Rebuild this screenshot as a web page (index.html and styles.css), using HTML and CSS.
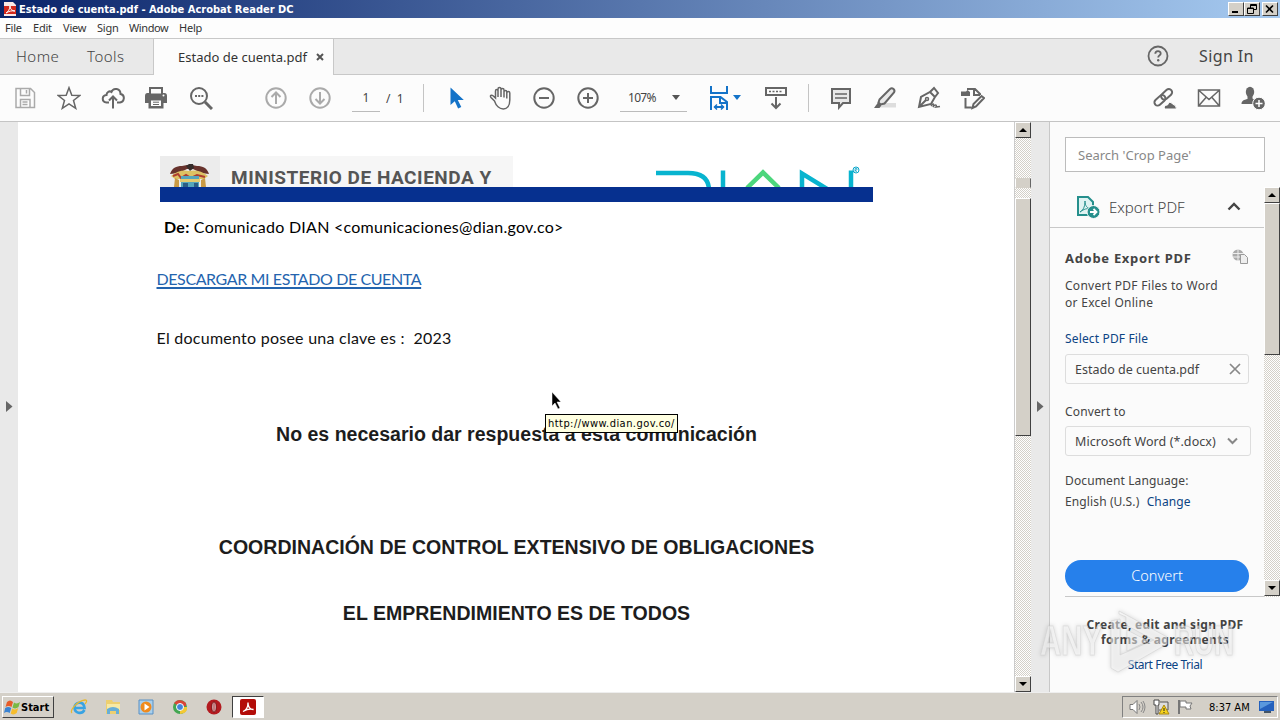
FILE: index.html
```
<!DOCTYPE html>
<html lang="en"><head>
<meta charset="utf-8">
<title>Estado de cuenta.pdf - Adobe Acrobat Reader DC</title>
<link rel="stylesheet" href="styles.css">
</head><body>

<div class="titlebar">
  <svg class="appicon" width="14" height="16" viewBox="0 0 14 16"><path d="M1 1h9l3 3v11H1z" fill="#fbe9e6"/><path d="M1 5h12v8H1z" fill="#d3291c"/><path d="M3 12c2-1 4-4 4-7 0 3 2 5 5 5-3-.5-6 0-9 2z" fill="none" stroke="#fff"/></svg>
  <span class="title">Estado de cuenta.pdf - Adobe Acrobat Reader DC</span>
  <span class="winbtn"><svg width="12" height="10"><path d="M2 8h6" stroke="#000" stroke-width="2"/></svg></span>
  <span class="winbtn"><svg width="12" height="10"><path d="M4.500 4V.5h6v5H8M4 1.500h7M1.500 4v5.500h6V4zM1 4.500h7" fill="none" stroke="#000"/></svg></span>
  <span class="winbtn close"><svg width="12" height="10"><path d="M2 1.500l7 7M9 1.500l-7 7" stroke="#000" stroke-width="1.600"/></svg></span>
</div>

<div class="menubar">
  <span class="m1">File</span><span class="m2">Edit</span><span class="m3">View</span><span class="m4">Sign</span><span class="m5">Window</span><span>Help</span>
</div>

<div class="tabs">
  <div class="tab-left"><span class="home">Home</span><span class="tools">Tools</span></div>
  <div class="tab-active"><span>Estado de cuenta.pdf</span><svg width="8" height="8"><path d="M1 1l6 6M7 1L1 7" stroke="#555" stroke-width="2"/></svg></div>
  <div class="tab-right">
    <svg width="22" height="22" viewBox="0 0 22 22"><circle cx="11" cy="11" r="9.500" fill="none" stroke="#666" stroke-width="1.800"/><path d="M8.300 8.800c0-3.600 5.400-3.400 5.400-.4 0 2-2.500 2-2.500 4.100" fill="none" stroke="#666" stroke-width="1.800"/><circle cx="11.200" cy="15.300" r="1.200" fill="#666"/></svg>
    <span class="signin">Sign In</span>
  </div>
</div>

<div class="toolbar">
  <span class="ic dim"><svg viewBox="0 0 24 24"><path d="M3 2.500h14.500l4 4v15H3zM7.500 3v6.500h9V3M7.500 21v-7.500h9.500V21M13.500 4v3.500M9.500 16h5M9.500 18.500h5"/></svg></span>
  <span class="ic"><svg viewBox="0 0 24 24"><path d="M12 1.700l2.800 7.500 8 .3-6.300 5 2.200 7.800-6.700-4.500-6.700 4.500 2.200-7.800-6.300-5 8-.3z"/></svg></span>
  <span class="ic"><svg viewBox="0 0 24 24"><path class="w2" d="M8 16.500H5.500c-5-.5-5-7 0-7.500 0-3 3-4.500 5-3 2-5 9-3.500 9 2 5 1 4 8-.5 8.500H16M12 22.500V11M8 14.500l4-4 4 4"/></svg></span>
  <span class="ic"><svg viewBox="0 0 24 24"><path class="fill" d="M4 1h14v6h1.500Q22 7 22 10v7h-3.500v5.500h-15V17H0v-7q0-3 2.500-3H4z"/><path d="M6 3h10v4.500H6zM6 14.500h10V20H6z" fill="#fcfcfc" stroke="none"/><path d="M8 16.200h6M8 18.500h6" stroke-width="1"/><circle cx="18.500" cy="9.500" r="1" fill="#fff" stroke="none"/></svg></span>
  <span class="ic"><svg viewBox="0 0 24 24"><circle class="w2" cx="10" cy="10" r="8"/><path d="M16 16l7 7" stroke-width="3"/><path d="M6 10h2M9.200 10h2M12.400 10h2" stroke-width="2"/></svg></span>
  <span class="ic dim up"><svg viewBox="0 0 24 24"><circle class="w2" cx="12" cy="12" r="9.700"/><path class="w2" d="M12 18V7M7.500 11L12 6.500l4.500 4.500"/></svg></span>
  <span class="ic dim"><svg viewBox="0 0 24 24"><circle class="w2" cx="12" cy="12" r="9.700"/><path class="w2" d="M12 6v11M7.500 13l4.500 4.500 4.500-4.500"/></svg></span>
  <span class="pageno">1</span><span class="pages">/&nbsp; 1</span>
  <span class="sep"></span>
  <span class="ic blue"><svg viewBox="0 0 24 24"><path d="M6.500 1.500v17.500l4.300-3.800 3.300 7.300 3.200-1.500-3.500-7h6z" fill="#1473c8" stroke="none"/></svg></span>
  <span class="ic"><svg viewBox="0 0 24 24"><path d="M6.500 15L3 11.500c-1.500-2 .5-3 2-1.700L7.500 12V5c0-2 2.500-2 2.500 0V3c0-2 3-2 3 0v1c0-2 3-2 3 0v2c0-2 2.800-2 2.800 0v1c0-2 3-2 3 0V14c0 12-12 11.500-15.300 1zM10 5v6M13 4v7M16 6v5.500M18.800 7v5.500"/></svg></span>
  <span class="ic"><svg viewBox="0 0 24 24"><circle class="w2" cx="12" cy="12" r="9.700"/><path class="w2" d="M7 12h10"/></svg></span>
  <span class="ic"><svg viewBox="0 0 24 24"><circle class="w2" cx="12" cy="12" r="9.700"/><path class="w2" d="M7 12h10M12 7v10"/></svg></span>
  <span class="zoom">107%<svg width="8" height="5"><path d="M0 0h8L4 5z" fill="#555"/></svg></span>
  <span class="ic blue fit"><svg viewBox="0 0 24 24"><path class="w2" d="M3 0v7h16V0M3 24V11h9.500l6.500 5v8M12 11v6h7M6.500 21h9"/><path d="M9 18.500L6.500 21l2.500 2.500M13 18.500l2.500 2.500-2.500 2.500"/></svg><svg class="drop" width="8" height="5" viewBox="0 0 8 5"><path d="M0 0h8L4 5z" fill="#1473c8" stroke="none"/></svg></span>
  <span class="ic scr"><svg viewBox="0 0 24 24"><path class="w2" d="M2 2h20v7H2zM12 11v11M7.500 17.500L12 22l4.500-4.500"/><path d="M5 5.500h14" stroke-dasharray="2 1.500"/></svg></span>
  <span class="sep sep2"></span>
  <span class="ic"><svg viewBox="0 0 24 24"><path d="M3 3h18v14h-7l-4 4.500V17H3z" fill="#eee" class="w2 tint"/><path d="M6 8h12M6 12h12"/></svg></span>
  <span class="ic"><svg viewBox="0 0 24 24"><path d="M11 17h12v4.500H7z" fill="#ddd" stroke="none"/><path class="w2 tint" d="M6.500 13.500L17 3c2.500-2 5.500 1 4 3.500L11.500 17.500l-4 1-2-2z"/><path class="fill" d="M5 16.500l3.500 3-2 2.500H1z"/></svg></span>
  <span class="ic"><svg viewBox="0 0 24 24"><path class="w2" d="M2 21L4 11l9-5 5 5-4 7zM2 21l7-7M13 6l4-4 4 5-3 4"/><path d="M14 20c3-4 3-1 2 1 3-4 4-1 3 0l4-.5"/><circle cx="10" cy="13" r="1.500"/></svg></span>
  <span class="ic"><svg viewBox="0 0 24 24"><path class="w2" d="M6 3h8l5 5v1M13 3v6h6M4.500 12v9.500h6M11.500 22l1-4 8-8 2.500 2-8 8.500z"/><path class="fill" d="M0 5.500h5L6.500 4 9 6v4H0z"/></svg></span>
  <span class="ic share"><svg viewBox="0 0 24 24"><g transform="rotate(-42 11 11)"><rect class="w2" x="-.5" y="7.500" width="12.500" height="6.500" rx="3.200"/><rect class="w2" x="8.500" y="7.500" width="12.500" height="6.500" rx="3.200"/></g><path d="M11.500 23q-1-4 3-4 2-5 5-1 4 1 4 5z" fill="#666" stroke="#fcfcfc" stroke-width="1"/></svg></span>
  <span class="ic"><svg viewBox="0 0 24 24"><path d="M1.500 4h21v16h-21zM2 4.500l10 9 10-9M2 19.500l7-8M22 19.500l-7-8"/></svg></span>
  <span class="ic"><svg viewBox="0 0 24 24"><ellipse class="fill" cx="9" cy="6" rx="4.200" ry="5.200"/><path class="fill" d="M6.500 9h5v3.500l3 2V18H.5c0-3.500 2.500-4 6-5z"/><circle cx="18" cy="17.500" r="6.300" fill="#666" stroke="#fcfcfc" stroke-width="1"/><path d="M18 14v7M14.500 17.500h7" stroke="#fff"/></svg></span>
</div>

<div class="main">
  <div class="strip left"><svg width="7" height="11"><path d="M0 0l6.500 5.500L0 11z" fill="#666"/></svg></div>

  <div class="document">
    <div class="letterhead">
      <div class="escudo"><svg width="60" height="31" viewBox="0 0 60 31"><path d="M10 18c2-6 6-8 12-8l5-1h5l5 1c6 0 10 2 12 8l-8-1-8-4h-6l-8 4z" fill="#67322c"/><path d="M26 10l3-2h4l1 4-4 3z" fill="#352c2a"/><path d="M11 20q9-7 18-5 10-2 19 5l-4 3H15z" fill="#ddc264"/><path d="M13 20l5-2 3 4 5-3 5 3 6-3 8 2" fill="none" stroke="#af3d30" stroke-width="2"/><path d="M21 20h18v11H21z" fill="#57a6bc"/><path d="M15 22l4 2v7h-5zM45 22l-4 2v7h5z" fill="#c99a45"/><path d="M20 23h20v3H20z" fill="#e4ca70"/><path d="M23 27h5v4h-5zM34 27h4v4h-4z" fill="#2c5d85"/></svg></div>
      <div class="ministry">MINISTERIO DE HACIENDA Y</div>
      <svg class="dian" width="210" height="31" viewBox="0 0 210 31"><path d="M0 17h32q20 0 21 16M67 14.500V31M146 31V17.500l26 16M195 14.500V31" fill="none" stroke="#08b4cf" stroke-width="4.500"/><path d="M91 32l16-15.500L123 32" fill="none" stroke="#4cd67c" stroke-width="4.500"/><circle cx="200" cy="14" r="3" fill="none" stroke="#08a5c9"/><path d="M199 16v-3.500h2v1.500h-2l2 2" fill="none" stroke="#08a5c9" stroke-width=".7"/></svg>
    </div>
    <div class="bluebar"></div>
    <p class="de"><b>De:</b> Comunicado DIAN &lt;comunicaciones@dian.gov.co&gt;</p>
    <p class="link"><a>DESCARGAR MI ESTADO DE CUENTA</a></p>
    <p class="clave">El documento posee una clave es :&nbsp; 2023</p>
    <p class="big b1">No es necesario dar respuesta a esta comunicación</p>
    <p class="big b2">COORDINACIÓN DE CONTROL EXTENSIVO DE OBLIGACIONES</p>
    <p class="big b3">EL EMPRENDIMIENTO ES DE TODOS</p>
  </div>

  <div class="scroll docscroll">
    <span class="sbtn"><svg width="8" height="4"><path d="M0 4h8L4 0z"/></svg></span>
    <span class="mark"></span>
    <span class="thumb"></span>
    <span class="sbtn end"><svg width="8" height="4"><path d="M0 0h8L4 4z"/></svg></span>
  </div>
  <div class="strip right"><svg width="7" height="11"><path d="M0 0l6.500 5.500L0 11z" fill="#666"/></svg></div>

  <div class="panel">
    <div class="search">Search 'Crop Page'</div>
    <div class="scroller">
      <div class="export">
        <div class="exporthead">
          <svg width="24" height="24" viewBox="0 0 24 24"><path d="M2 2h10l5 5v13H2z" fill="#dff3f2" stroke="#258f8c" stroke-width="2"/><path d="M4 17c4-2 5-7 5-11 0 5 2 7 6 8-4-1-7 0-11 3z" fill="none" stroke="#258f8c"/><circle cx="17.500" cy="17" r="6.500" fill="#258f8c" stroke="#fbfbfb"/><path d="M14 17h6M17.500 14l3 3-3 3" fill="none" stroke="#fff" stroke-width="1.800"/></svg>
          <span>Export PDF</span>
          <svg class="chev" width="14" height="9"><path d="M1.500 7.500L7 2l5.500 5.500" fill="none" stroke="#444" stroke-width="2.400"/></svg>
        </div>
        <div class="exportbody">
          <div class="h"><b>Adobe Export PDF</b><svg width="17" height="17" viewBox="0 0 17 17"><circle cx="6" cy="6" r="5.500" fill="#aaa"/><path d="M1 4.500h10M1 8h8M6 0v12" stroke="#eee" fill="none"/><path d="M8.500 5.500h4l3 3v6h-7z" fill="#eee" stroke="#999"/></svg></div>
          <p class="desc">Convert PDF Files to Word<br/>or Excel Online</p>
          <p class="select">Select PDF File</p>
          <div class="field">Estado de cuenta.pdf<svg width="12" height="12"><path d="M1 1l10 10M11 1L1 11" stroke="#888" stroke-width="1.700"/></svg></div>
          <p class="to">Convert to</p>
          <div class="field f2">Microsoft Word (*.docx)<svg width="11" height="8"><path d="M1 1.500l4.500 4.500L10 1.500" fill="none" stroke="#888" stroke-width="2"/></svg></div>
          <p class="lang">Document Language:<br/><span class="english">English (U.S.)</span> <span class="change">Change</span></p>
          <div class="convert">Convert</div>
        </div>
      </div>
      <div class="scroll panelscroll">
        <span class="sbtn"><svg width="8" height="4"><path d="M0 4h8L4 0z"/></svg></span>
        <span class="thumb"></span>
        <span class="sbtn end"><svg width="8" height="4"><path d="M0 0h8L4 4z"/></svg></span>
      </div>
    </div>
    <div class="promo"><b class="p1">Create, edit and sign PDF</b><b class="p2">forms &amp; agreements</b><span>Start Free Trial</span></div>
  </div>
</div>

<div class="taskbar">
  <div class="start"><svg width="17" height="17" viewBox="0 0 17 17"><path d="M3 3q3-3 6 0L7.500 8q-3-2-6 0z" fill="#e75c29"/><path d="M10 3.500q3 2 6-.5l-1.500 5q-3 2.500-6 .5z" fill="#79b943"/><path d="M1.200 9q3-2 6 0l-1.500 5q-3-2-5.700 0z" fill="#3a83d2"/><path d="M8.200 9.500q3 2 6-.5l-1.500 5q-3 2.500-6 .5z" fill="#f6bd2c"/></svg>Start</div>
  <svg class="t ie" viewBox="0 0 18 18"><path d="M14.500 12c-3 5-10 3-10-2.500s9-7.500 10 .5H5" fill="none" stroke="#38a3e3" stroke-width="2.600"/><path d="M2 15C-1 13 7 3 15 2c3 0 1 3 0 4" fill="none" stroke="#e8b82f" stroke-width="1.300"/></svg>
  <svg class="t" viewBox="0 0 18 18"><path d="M2 2h6l1 2h7v12H2z" fill="#edcf70"/><path d="M3 6h13v6H3z" fill="#f7e9a5"/><path d="M3 16v-5q6-4 12 0v5h-3v-3H6v3z" fill="#67aed7"/></svg>
  <svg class="t" viewBox="0 0 18 18"><path d="M2 2h14v14H2z" fill="#a8cfec" stroke="#5990c5"/><circle cx="9" cy="9" r="5.500" fill="#ef8a1d"/><path d="M7.500 5.500l5 3.500-5 3.500z" fill="#fff"/></svg>
  <svg class="t" viewBox="0 0 18 18"><circle cx="9" cy="9" r="7" fill="#43a651"/><path d="M9 9L3 5q5-6 12 0v3z" fill="#da4437"/><path d="M9 9h7q1 6-7 7z" fill="#f5c933"/><circle cx="9" cy="9" r="3.500" fill="#4285db" stroke="#fff"/></svg>
  <svg class="t" viewBox="0 0 18 18"><circle cx="9" cy="9" r="7.500" fill="#b31b20"/><ellipse cx="9" cy="9" rx="2.200" ry="5" fill="#efdddd" stroke="#741013"/><path d="M9 5v8" stroke="#a11b20"/></svg>
  <div class="task"><svg width="16" height="16" viewBox="0 0 16 16"><rect width="16" height="16" rx="2" fill="#b30c08"/><path d="M3 12.500c4-1.500 5-6 5-9 0 4 2 7 5.500 7-4-1-7 0-10.500 2z" fill="none" stroke="#fff" stroke-width="1.300"/></svg></div>
  <div class="tray">
    <svg width="17" height="16" viewBox="0 0 17 16"><path d="M1 5.500h3l4-4v13l-4-4H1z" fill="#fff" stroke="#777"/><path d="M10 5q2 3 0 6M12 3q4 5 0 10M14 2q4 6 0 12" fill="none" stroke="#888"/></svg>
    <svg width="17" height="16" viewBox="0 0 17 16"><path d="M1 1h5v5H5v9H3V6H1z" fill="#fff" stroke="#444"/><path d="M7 3h8v8H6" fill="#ddd" stroke="#555"/><path d="M11 6l5 9H6z" fill="#f6d31b" stroke="#ac8911"/><path d="M11 9v3M11 13v1" stroke="#222"/></svg>
    <svg width="17" height="16" viewBox="0 0 17 16"><path d="M2 1v14" stroke="#777" stroke-width="2"/><path d="M3 2h6v2h6l-2 3 1 3H9V8H3z" fill="#fff" stroke="#777"/></svg>
    <span class="clock">8:37 AM</span>
    <svg width="16" height="14" viewBox="0 0 16 14"><path d="M0 1h15v10H0z" fill="#2461bd"/><path d="M1 2h13L1 9z" fill="#5998dd"/><path d="M5 12h7" stroke="#456" stroke-width="2"/></svg>
  </div>
</div>

<div class="tooltip">http://www.dian.gov.co/</div>
<svg class="cursor" width="13" height="20" viewBox="0 0 13 20"><path d="M1 1v14l3-3 3 6 2-1-3-6h4z" fill="#000" stroke="#fff" stroke-width=".5"/></svg>
<svg class="watermark" width="204" height="70" viewBox="0 0 204 70"><g fill="#fff" fill-opacity=".5" stroke="#ccc" stroke-opacity=".5"><text x="4" y="48" textLength="62" lengthAdjust="spacingAndGlyphs">ANY</text><text x="138" y="48" textLength="60" lengthAdjust="spacingAndGlyphs">RUN</text><path d="M75 14l9-2v36l34-15-28-15v-8l-7-3v-3l48 26v7L82 65l-7-4z"/><path d="M91 23l21 11-21 10z"/></g></svg>
</body></html>
```
FILE: styles.css
```
* { box-sizing: border-box; }
body { margin: 0; width: 1280px; height: 720px; overflow: hidden; background: #fff;
       font-family: "Noto Sans", sans-serif; font-size: 12px; color: #444; white-space: nowrap;
       display: flex; flex-direction: column; }
p { margin: 0; }
svg { display: block; flex: none; }

.titlebar { height: 18px; flex: none; display: flex; align-items: center; padding: 0 2px 0 3px;
            background: linear-gradient(90deg, #0a246a, #a6caf0); }
.title { flex: 1; margin-left: 2px; color: #fff; font: bold 11px "DejaVu Sans Condensed", "DejaVu Sans", sans-serif; font-stretch: condensed; }
.winbtn { width: 16px; height: 14px; background: #d4d0c8; border: 1px solid; border-color: #fff #404040 #404040 #fff;
          display: flex; align-items: center; justify-content: center; }
.close { margin-left: 2px; }

.menubar { height: 20px; flex: none; padding-left: 5px; display: flex; line-height: 20px; font-size: 11px; letter-spacing: -.2px; color: #333; background: #fdfdfd; }
.m1 { width: 28px; }
.m2 { width: 30px; }
.m3 { width: 34px; }
.m4 { width: 32px; }
.m5 { width: 50px; letter-spacing: -.4px; }

.tabs { height: 37px; flex: none; display: flex; background: #e9e9e9; border-top: 1px solid #c8c8c8; }
.tab-left { width: 154px; padding-left: 16px; display: flex; line-height: 35px; font-size: 15px; font-weight: 300;
            letter-spacing: .5px; border-right: 1px solid #c8c8c8; border-bottom: 1px solid #c8c8c8; }
.home { width: 71px; }
.tab-active { width: 179px; padding: 0 0 1px 24px; display: flex; align-items: center; background: #fcfcfc; font-size: 13px; color: #333; }
.tab-active span { width: 138px; }
.tab-right { flex: 1; display: flex; align-items: center; justify-content: flex-end; padding-bottom: 1px; border-left: 1px solid #c8c8c8; border-bottom: 1px solid #c8c8c8; }
.signin { width: 81px; margin-left: 30px; font-size: 16px; letter-spacing: .4px; }

.toolbar { height: 47px; flex: none; display: flex; align-items: center; padding-left: 3px; background: #fcfcfc; border-bottom: 1px solid #c4c4c4; }
.ic { width: 44px; display: flex; justify-content: center; position: relative; }
.ic svg { width: 24px; height: 24px; fill: none; stroke: #666; stroke-width: 1.5; }
.ic.dim svg { stroke: #aaa; }
.ic.blue svg { stroke: #1473c8; }
.ic .w2 { stroke-width: 2; }
.ic .fill { fill: #666; stroke: none; }
.ic .tint { fill: #e8e8e8; }
.ic .drop { position: absolute; left: 35px; top: 9px; width: 8px; height: 5px; }
.up { margin-left: 31px; }
.pageno { width: 28px; height: 28px; margin-left: 10px; border-bottom: 1px solid #bbb; line-height: 28px; text-align: center; }
.pages { margin-left: 6px; width: 37px; }
.sep { width: 1px; height: 28px; background: #c4c4c4; margin-right: 10px; }
.zoom { width: 67px; height: 28px; margin-left: 10px; padding-left: 8px; border-bottom: 1px solid #bbb; line-height: 28px;
        display: flex; align-items: center; justify-content: space-between; padding-right: 7px; letter-spacing: -.7px; }
.fit { margin-left: 11px; }
.scr { margin-left: 12px; }
.sep2 { margin-left: 10px; }
.share { margin-left: 148px; }

.main { flex: 1; display: flex; min-height: 0; }
.strip { width: 18px; background: #e9e9e9; display: flex; align-items: center; padding: 0 0 1px 6px; }
.document { width: 996px; padding-top: 34px; color: #111; font: 16px/24px Lato, sans-serif; }
.letterhead { height: 31px; margin-left: 142px; display: flex; overflow: hidden; }
.escudo { width: 60px; background: #ececec; }
.ministry { width: 293px; padding-left: 11px; background: #f6f6f6; color: #555; font: bold 19px/43px Roboto, sans-serif; letter-spacing: .52px; }
.dian { margin-left: 143px; }
.bluebar { width: 713px; height: 15px; margin-left: 142px; background: #06308f; }
.de { margin: 13px 0 0 146px; color: #000; letter-spacing: .26px; }
.link { margin: 28px 0 0 138.5px; color: #2464ae; letter-spacing: -.4px; }
.link a { text-decoration: underline; text-decoration-thickness: 2px; text-underline-offset: 2px; }
.clave { margin: 35px 0 0 138.5px; letter-spacing: .25px; }
.big { text-align: center; font: bold 19.55px/24px "Liberation Sans", sans-serif; color: #1d1d1d; padding-left: 1px; }
.b1 { margin-top: 72px; }
.b2 { margin-top: 89px; }
.b3 { margin-top: 42px; }

.scroll { display: flex; flex-direction: column; background: repeating-conic-gradient(#d4d0c8 0 25%, #fff 0 50%) 0 0 / 2px 2px; }
.sbtn, .thumb, .mark { background: #d4d0c8; border: 1px solid; border-color: #fff #404040 #404040 #fff; }
.sbtn { height: 16px; display: flex; align-items: center; justify-content: center; }
.end { margin-top: auto; }
.docscroll { width: 17px; border-left: 1px solid #ccc; }
.mark { height: 10px; margin-top: 40px; border-color: #d4d0c8 #666 #d4d0c8 #fff; }
.docscroll .thumb { height: 238px; margin-top: 10px; }
.panelscroll { width: 16px; }
.panelscroll .thumb { height: 152px; }
.panelscroll .end { margin-bottom: 1px; }

.panel { width: 231px; display: flex; flex-direction: column; background: #fbfbfb; border-left: 1px solid #c8c8c8; }
.search { width: 200px; height: 35px; margin: 15px 0 15px 15px; padding-left: 12px; border: 1px solid #bcbcbc; background: #fff; color: #888; font-size: 13px; line-height: 34px; }
.scroller { height: 410px; display: flex; }
.export { width: 214px; }
.exporthead { height: 41px; padding: 0 23px 0 26px; display: flex; align-items: center; border-bottom: 1px solid #c8c8c8; font-size: 15px; font-weight: 300; }
.exporthead span { margin-left: 9px; }
.exporthead .chev { margin: 0 0 2px auto; }
.exportbody { height: 369px; margin-left: 15px; padding-top: 20px; border-bottom: 1px solid #c8c8c8; }
.h { width: 184px; height: 19px; display: flex; justify-content: space-between; align-items: center; font-size: 13px; letter-spacing: .7px; }
.desc { margin-top: 10px; line-height: 17px; letter-spacing: .28px; }
.select { margin-top: 19px; line-height: 18px; letter-spacing: .15px; color: #0c4484; }
.field { width: 184px; height: 30px; margin-top: 6px; padding: 0 7px 0 9px; display: flex; align-items: center; justify-content: space-between;
         border: 1px solid #ddd; border-radius: 3px; font-size: 12.5px; }
.to { margin-top: 19px; line-height: 18px; letter-spacing: .15px; }
.f2 { width: 186px; margin-top: 5px; padding-right: 12px; letter-spacing: .08px; }
.lang { margin-top: 14px; line-height: 21px; letter-spacing: .12px; }
.change { margin-left: 4px; color: #0c4484; }
.convert { width: 184px; height: 32px; margin-top: 48px; border-radius: 16px; background: #2680eb; color: #fff; text-align: center; font-size: 14.5px; font-weight: 300; line-height: 31px; }
.promo { display: flex; flex-direction: column; align-items: center; padding-top: 20px; line-height: 15px; }
.promo b { letter-spacing: .3px; }
.promo span { margin-top: 10px; letter-spacing: -.45px; color: #0c4484; }

.taskbar { height: 28px; flex: none; padding: 1px 2px 0; display: flex; align-items: center; background: #d4d0c8; border-top: 1px solid #eee; }
.start { width: 52px; height: 22px; display: flex; align-items: center; padding-left: 1px; border: 1px solid; border-color: #fff #404040 #404040 #fff;
         color: #000; font: bold 11px "DejaVu Sans Condensed", "DejaVu Sans", sans-serif; font-stretch: condensed; }
.t { width: 18px; height: 18px; margin-right: 15.7px; }
.ie { margin-left: 16px; }
.task { width: 32px; height: 22px; margin-left: -6px; background: #fff; border: 1px solid; border-color: #404040 #fff #fff #404040; display: flex; align-items: center; justify-content: center; }
.tray { width: 156px; height: 22px; margin-left: auto; padding: 0 2px 0 6px; display: flex; align-items: center; gap: 7px; border: 1px solid; border-color: #808080 #fff #fff #808080; color: #000; }
.clock { flex: 1; padding-left: 8px; font: 11px "DejaVu Sans Condensed", "DejaVu Sans", sans-serif; font-stretch: condensed; }

.tooltip { position: absolute; left: 545px; top: 414px; width: 133px; height: 19px; border: 1px solid #000; background: #ffffe1; color: #000; padding-left: 2px;
           font: 11px/18px "DejaVu Sans Condensed", "DejaVu Sans", sans-serif; font-stretch: condensed; letter-spacing: .45px; }
.cursor { position: absolute; left: 551px; top: 391px; }
.watermark { position: absolute; left: 1036px; top: 607px; font: bold 42px "Liberation Sans", sans-serif; filter: drop-shadow(0 0 2px rgba(0,0,0,.25)); }
```
